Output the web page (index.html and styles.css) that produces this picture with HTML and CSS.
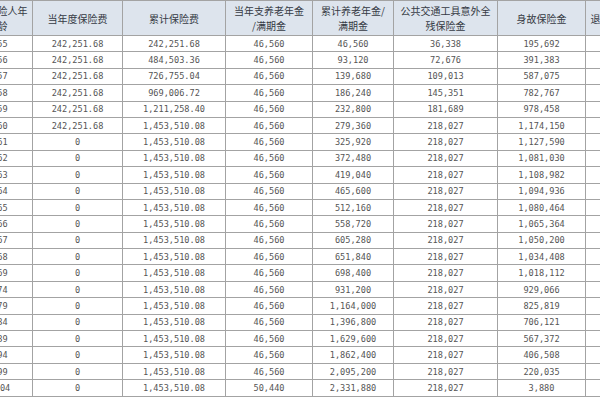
FILE: index.html
```html
<!DOCTYPE html>
<html lang="zh-CN">
<head>
<meta charset="utf-8">
<title>保险利益表</title>
<link rel="stylesheet" href="styles.css">
</head>
<body>
<table class="benefit-table">
  <colgroup>
    <col class="c-age"><col class="c-prem"><col class="c-cum"><col class="c-ann"><col class="c-cumann"><col class="c-acc"><col class="c-death"><col class="c-surr">
  </colgroup>
  <thead>
    <tr>
      <th>被保险人年<br>龄</th>
      <th>当年度保险费</th>
      <th>累计保险费</th>
      <th>当年支养老年金<br>/满期金</th>
      <th>累计养老年金/<br>满期金</th>
      <th>公共交通工具意外全<br>残保险金</th>
      <th>身故保险金</th>
      <th>退保金（现金价值）</th>
    </tr>
  </thead>
  <tbody>
    <tr><td>55</td><td>242,251.68</td><td>242,251.68</td><td>46,560</td><td>46,560</td><td>36,338</td><td>195,692</td><td></td></tr>
    <tr><td>56</td><td>242,251.68</td><td>484,503.36</td><td>46,560</td><td>93,120</td><td>72,676</td><td>391,383</td><td></td></tr>
    <tr><td>57</td><td>242,251.68</td><td>726,755.04</td><td>46,560</td><td>139,680</td><td>109,013</td><td>587,075</td><td></td></tr>
    <tr><td>58</td><td>242,251.68</td><td>969,006.72</td><td>46,560</td><td>186,240</td><td>145,351</td><td>782,767</td><td></td></tr>
    <tr><td>59</td><td>242,251.68</td><td>1,211,258.40</td><td>46,560</td><td>232,800</td><td>181,689</td><td>978,458</td><td></td></tr>
    <tr><td>60</td><td>242,251.68</td><td>1,453,510.08</td><td>46,560</td><td>279,360</td><td>218,027</td><td>1,174,150</td><td></td></tr>
    <tr><td>61</td><td>0</td><td>1,453,510.08</td><td>46,560</td><td>325,920</td><td>218,027</td><td>1,127,590</td><td></td></tr>
    <tr><td>62</td><td>0</td><td>1,453,510.08</td><td>46,560</td><td>372,480</td><td>218,027</td><td>1,081,030</td><td></td></tr>
    <tr><td>63</td><td>0</td><td>1,453,510.08</td><td>46,560</td><td>419,040</td><td>218,027</td><td>1,108,982</td><td></td></tr>
    <tr><td>64</td><td>0</td><td>1,453,510.08</td><td>46,560</td><td>465,600</td><td>218,027</td><td>1,094,936</td><td></td></tr>
    <tr><td>65</td><td>0</td><td>1,453,510.08</td><td>46,560</td><td>512,160</td><td>218,027</td><td>1,080,464</td><td></td></tr>
    <tr><td>66</td><td>0</td><td>1,453,510.08</td><td>46,560</td><td>558,720</td><td>218,027</td><td>1,065,364</td><td></td></tr>
    <tr><td>67</td><td>0</td><td>1,453,510.08</td><td>46,560</td><td>605,280</td><td>218,027</td><td>1,050,200</td><td></td></tr>
    <tr><td>68</td><td>0</td><td>1,453,510.08</td><td>46,560</td><td>651,840</td><td>218,027</td><td>1,034,408</td><td></td></tr>
    <tr><td>69</td><td>0</td><td>1,453,510.08</td><td>46,560</td><td>698,400</td><td>218,027</td><td>1,018,112</td><td></td></tr>
    <tr><td>74</td><td>0</td><td>1,453,510.08</td><td>46,560</td><td>931,200</td><td>218,027</td><td>929,066</td><td></td></tr>
    <tr><td>79</td><td>0</td><td>1,453,510.08</td><td>46,560</td><td>1,164,000</td><td>218,027</td><td>825,819</td><td></td></tr>
    <tr><td>84</td><td>0</td><td>1,453,510.08</td><td>46,560</td><td>1,396,800</td><td>218,027</td><td>706,121</td><td></td></tr>
    <tr><td>89</td><td>0</td><td>1,453,510.08</td><td>46,560</td><td>1,629,600</td><td>218,027</td><td>567,372</td><td></td></tr>
    <tr><td>94</td><td>0</td><td>1,453,510.08</td><td>46,560</td><td>1,862,400</td><td>218,027</td><td>406,508</td><td></td></tr>
    <tr><td>99</td><td>0</td><td>1,453,510.08</td><td>46,560</td><td>2,095,200</td><td>218,027</td><td>220,035</td><td></td></tr>
    <tr><td>104</td><td>0</td><td>1,453,510.08</td><td>50,440</td><td>2,331,880</td><td>218,027</td><td>3,880</td><td></td></tr>
  </tbody>
</table>
</body>
</html>
```

FILE: styles.css
```css
html, body {
  margin: 0;
  padding: 0;
  background: #ffffff;
  overflow: hidden;
}

body {
  width: 600px;
  height: 400px;
}

.benefit-table {
  margin-left: -28px;
  border-collapse: collapse;
  table-layout: fixed;
  width: 713px;
}

.c-age { width: 60px; }
.c-prem { width: 90px; }
.c-cum { width: 103px; }
.c-ann { width: 87px; }
.c-cumann { width: 81px; }
.c-acc { width: 104px; }
.c-death { width: 88px; }
.c-surr { width: 100px; }

.benefit-table th,
.benefit-table td {
  border: 1px solid #a3a3a3;
  padding: 0;
  text-align: center;
  white-space: nowrap;
  overflow: hidden;
}

.benefit-table th {
  height: 34px;
  background: #dde4ed;
  color: #353a44;
  font-family: "Noto Sans CJK SC", "Noto Sans", sans-serif;
  font-size: 10px;
  font-weight: normal;
  line-height: 15px;
}

.benefit-table td {
  height: 15.4px;
  color: #555555;
  font-family: "DejaVu Sans Mono", "Liberation Mono", monospace;
  font-size: 8.6px;
  line-height: 14px;
}
```
